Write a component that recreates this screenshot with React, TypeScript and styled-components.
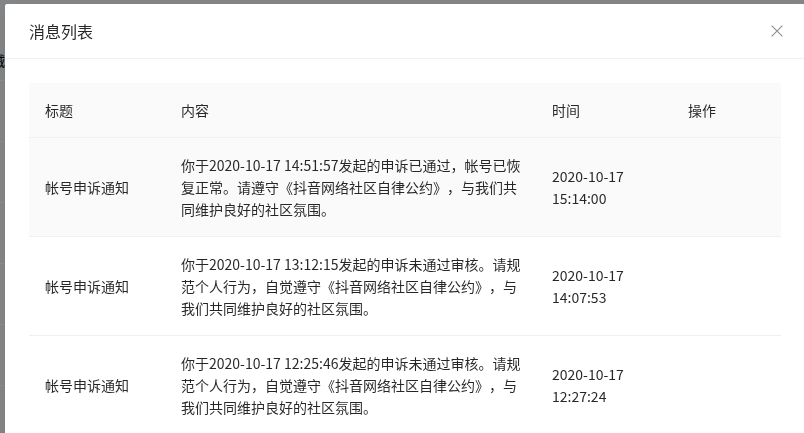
import styled, { createGlobalStyle } from "styled-components"

const GlobalStyle = createGlobalStyle`
  html, body {
    margin: 0;
    padding: 0;
    width: 100%;
    height: 100%;
    overflow: hidden;
  }
  body {
    font-family: "Noto Sans CJK SC", "Noto Sans", sans-serif;
    font-size: 14px;
    color: rgba(0, 0, 0, 0.85);
    background: #f0f2f5;
    text-spacing-trim: space-all;
  }
`

type Message = {
  title: string
  content: string
  time: string
}

const messages: Message[] = [
  {
    title: "帐号申诉通知",
    content: "你于2020-10-17 14:51:57发起的申诉已通过，帐号已恢复正常。请遵守《抖音网络社区自律公约》，与我们共同维护良好的社区氛围。",
    time: "2020-10-17 15:14:00",
  },
  {
    title: "帐号申诉通知",
    content: "你于2020-10-17 13:12:15发起的申诉未通过审核。请规范个人行为，自觉遵守《抖音网络社区自律公约》，与我们共同维护良好的社区氛围。",
    time: "2020-10-17 14:07:53",
  },
  {
    title: "帐号申诉通知",
    content: "你于2020-10-17 12:25:46发起的申诉未通过审核。请规范个人行为，自觉遵守《抖音网络社区自律公约》，与我们共同维护良好的社区氛围。",
    time: "2020-10-17 12:27:24",
  },
]

// page behind the mask, only a 5px strip of it shows
const Page = styled.div`
  padding-top: 49px;
`

const BgLabel = styled.div`
  height: 22px;
  line-height: 22px;
  margin: 0 0 9px -23px;
  color: #000;
  white-space: nowrap;
`

const BgRow = styled.div`
  height: 61px;
  box-sizing: border-box;
  border-top: 1px solid #fff;
`

const Mask = styled.div`
  position: fixed;
  inset: 0;
  background: rgba(0, 0, 0, 0.45);
  padding: 4px 0 0 5px;
`

const Modal = styled.div`
  width: 800px;
  background: #fff;
  border-radius: 2px;
  box-shadow: 0 3px 6px -4px rgba(0, 0, 0, 0.12), 0 6px 16px 0 rgba(0, 0, 0, 0.08);
`

const Header = styled.div`
  display: flex;
  align-items: center;
  height: 54px;
  padding-left: 24px;
  border-bottom: 1px solid #f0f0f0;
`

const Title = styled.div`
  flex: 1;
  font-size: 16px;
  line-height: 22px;
  color: rgba(0, 0, 0, 0.85);
`

const CloseBtn = styled.button`
  width: 56px;
  height: 54px;
  display: flex;
  align-items: center;
  justify-content: center;
  border: 0;
  padding: 0;
  background: transparent;
  color: rgba(0, 0, 0, 0.45);
  cursor: pointer;
`

const Body = styled.div`
  padding: 24px;
`

const Table = styled.table`
  width: 752px;
  table-layout: fixed;
  border-collapse: separate;
  border-spacing: 0;
`

const Th = styled.th`
  padding: 16px;
  text-align: left;
  font-weight: 400;
  line-height: 22px;
  background: #fafafa;
  color: rgba(0, 0, 0, 0.85);
  border-bottom: 1px solid #f0f0f0;
`

const Tr = styled.tr<{ $hover?: boolean }>`
  background: ${({ $hover }) => ($hover ? "#fafafa" : "#fff")};
`

const Td = styled.td<{ $wide?: boolean }>`
  padding: ${({ $wide }) => ($wide ? "16px 12px 16px 16px" : "16px")};
  line-height: 22px;
  vertical-align: middle;
  border-bottom: 1px solid #f0f0f0;
  word-break: break-word;
`

const CloseIcon = () => (
  <svg width="12" height="12" viewBox="0 0 12 12">
    <path d="M0.6 0.6L11.4 11.4M11.4 0.6L0.6 11.4" stroke="currentColor" strokeWidth="1.1" fill="none" />
  </svg>
)

export default function App() {
  return (
    <>
      <GlobalStyle />
      <Page>
        <BgLabel>机械</BgLabel>
        {Array.from({ length: 6 }).map((_, i) => (
          <BgRow key={i} />
        ))}
      </Page>
      <Mask>
        <Modal>
          <Header>
            <Title>消息列表</Title>
            <CloseBtn aria-label="关闭">
              <CloseIcon />
            </CloseBtn>
          </Header>
          <Body>
            <Table>
              <colgroup>
                <col style={{ width: 136 }} />
                <col style={{ width: 371 }} />
                <col style={{ width: 136 }} />
                <col style={{ width: 109 }} />
              </colgroup>
              <thead>
                <tr>
                  <Th>标题</Th>
                  <Th>内容</Th>
                  <Th>时间</Th>
                  <Th>操作</Th>
                </tr>
              </thead>
              <tbody>
                {messages.map((m, i) => (
                  <Tr key={i} $hover={i === 0}>
                    <Td>{m.title}</Td>
                    <Td $wide>{m.content}</Td>
                    <Td>{m.time}</Td>
                    <Td />
                  </Tr>
                ))}
              </tbody>
            </Table>
          </Body>
        </Modal>
      </Mask>
    </>
  )
}
